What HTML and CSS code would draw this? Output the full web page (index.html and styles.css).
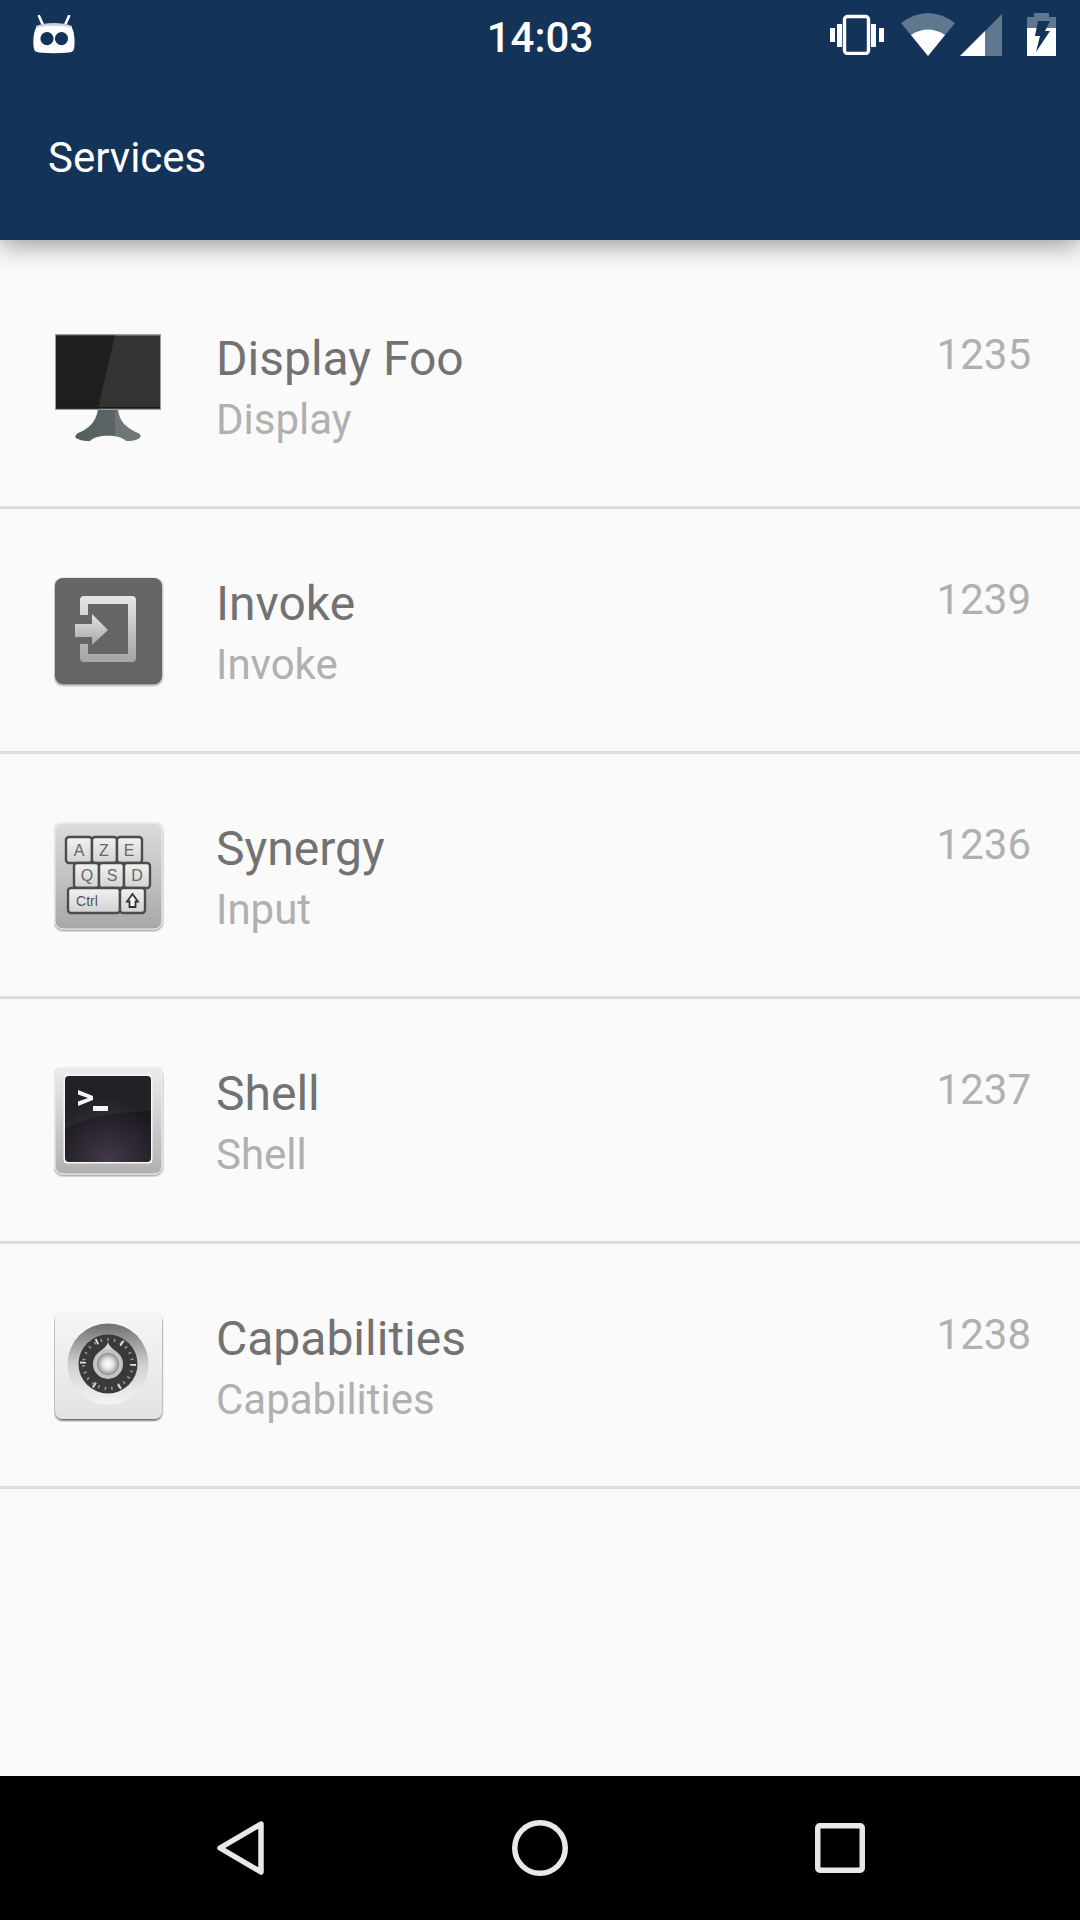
FILE: index.html
```html
<!DOCTYPE html>
<html lang="en">
<head>
<meta charset="utf-8">
<title>Services</title>
<link rel="stylesheet" href="styles.css">
</head>
<body>
<div class="screen">
  <header class="appbar">
    <div class="status">
      <svg class="logo" width="44" height="40" viewBox="0 0 44 40">
        <path d="M6 1 L9.500 9 M36 1 L32.500 9" stroke="#fff" stroke-width="2.600" stroke-linecap="round" fill="none"/>
        <path d="M3 11 C12 7 30 7 39 11 L39 14 H3 Z" fill="#c9d1da"/>
        <path fill-rule="evenodd" fill="#fff" d="M3 13 C12 10 30 10 39 13 C42 18 42 30 41 34 C40 37 38 37 36 37.500 C26 38.500 16 38.500 6 37.500 C4 37 2 37 1 34 C0 30 0 18 3 13 Z M14 17 A6.600 6.600 0 1 0 14 30.200 A6.600 6.600 0 1 0 14 17 Z M28.500 17 A6.600 6.600 0 1 0 28.500 30.200 A6.600 6.600 0 1 0 28.500 17 Z"/>
      </svg>
      <div class="clock">14:03</div>
      <div class="sysicons">
        <svg class="sys-vibrate" width="56" height="42" viewBox="0 0 56 42">
          <rect x="15.500" y="3.500" width="24" height="37" rx="3" fill="none" stroke="#fff" stroke-width="3.400"/>
          <path fill="#fff" d="M1 15h5v14H1zM8 11h5v23H8zM42 11h5v23h-5zM50 15h5v14h-5z"/>
        </svg>
        <svg class="sys-wifi" width="54" height="44" viewBox="0 0 54 44">
          <path fill="#5f7890" d="M27 43 L0 10 Q27 -10 54 10 Z"/>
          <path fill="#fff" d="M27 43 L10 22 Q27 11 44 22 Z"/>
        </svg>
        <svg class="sys-signal" width="42" height="44" viewBox="0 0 42 44">
          <path fill="#5f7890" d="M0 43 L42 1 V43 Z"/>
          <path fill="#fff" d="M0 43 L25 18 V43 Z"/>
        </svg>
        <svg class="sys-battery" width="30" height="44" viewBox="0 0 30 44">
          <path fill="#5f7890" d="M7 0h15v4h7v12H0V4h7z"/>
          <path fill="#fff" d="M0 15h29v28H0z"/>
          <path fill="#133458" d="M11 8 H23 L18 18 H23 L9 39 L13 23 H8 Z"/>
        </svg>
      </div>
    </div>
    <h1 class="title">Services</h1>
  </header>

  <main class="list">
    <section class="row">
      <svg class="icon" width="110" height="110" viewBox="0 0 110 110">
        <defs>
          <linearGradient id="stand" x1="0" x2="1" y1="0" y2="0"><stop offset="0" stop-color="#565e60"/><stop offset=".6" stop-color="#5c6466"/><stop offset=".62" stop-color="#6f7678"/><stop offset="1" stop-color="#6f7678"/></linearGradient>
        </defs>
        <g transform="translate(0 1)">
          <path fill="url(#stand)" d="M44 76 H64 C65 88 72 95 84 100 C88 102 87 105 84 106 C80 108 76 108 72 108 C66 101 42 101 36 108 C32 108 28 108 24 106 C20 105 21 102 24 100 C34 96 42 90 44 76 Z"/>
          <rect x="1" y="1" width="106" height="76" fill="#9aa0a0"/>
          <rect x="2" y="2.500" width="104" height="73" fill="#343433"/>
          <path fill="#1f1f1e" d="M2 2.500 H61 L44 75.500 H2 Z"/>
          <rect x="2" y="74" width="104" height="1.500" fill="#1a1a1a"/>
        </g>
      </svg>
      <div class="text"><div class="name">Display Foo</div><div class="type">Display</div></div>
      <div class="pid">1235</div>
    </section>

    <section class="row">
      <svg class="icon" width="110" height="110" viewBox="0 0 110 110">
        <defs>
          <linearGradient id="inv" x1="0" x2="0" y1="0" y2="1"><stop offset="0" stop-color="#e4e4e4"/><stop offset="1" stop-color="#a6a6a6"/></linearGradient>
          <filter id="sh" x="-10%" y="-10%" width="120%" height="120%"><feDropShadow dx="0" dy="1" stdDeviation="1.500" flood-color="#000" flood-opacity=".55"/></filter>
        </defs>
        <rect x="1" y="1" width="107" height="106" rx="8" fill="#656565" filter="url(#sh)"/>
        <path fill="none" stroke="url(#inv)" stroke-width="8" stroke-linejoin="round" d="M30 38 V23 H78 V81 H30 V67"/>
        <path fill="url(#inv)" d="M21 47 H38 V37 L54 53 L38 68 V60 H21 Z"/>
      </svg>
      <div class="text"><div class="name">Invoke</div><div class="type">Invoke</div></div>
      <div class="pid">1239</div>
    </section>

    <section class="row">
      <svg class="icon" width="110" height="110" viewBox="0 0 110 110">
        <defs>
          <linearGradient id="kb" x1="0" x2="0" y1="0" y2="1"><stop offset="0" stop-color="#dcdcdc"/><stop offset="1" stop-color="#a8a8a8"/></linearGradient>
          <linearGradient id="key" x1="0" x2="0" y1="0" y2="1"><stop offset="0" stop-color="#f2f2f2"/><stop offset="1" stop-color="#d2d2d2"/></linearGradient>
          <filter id="sh2" x="-10%" y="-10%" width="120%" height="120%"><feDropShadow dx="0" dy="1" stdDeviation="1.500" flood-color="#000" flood-opacity=".55"/></filter>
        </defs>
        <rect x="1" y="1" width="107" height="106" rx="8" fill="url(#kb)" stroke="#eee" stroke-width="1" filter="url(#sh2)"/>
        <g fill="url(#key)" stroke="#4c4c4c" stroke-width="2.400">
          <rect x="12" y="15" width="26" height="26" rx="3"/>
          <rect x="38" y="15" width="25" height="26" rx="3"/>
          <rect x="63" y="15" width="25" height="26" rx="3"/>
          <rect x="20" y="41" width="25" height="25" rx="3"/>
          <rect x="45" y="41" width="25" height="25" rx="3"/>
          <rect x="70" y="41" width="26" height="25" rx="3"/>
          <rect x="14" y="66" width="52" height="25" rx="3"/>
          <rect x="66" y="66" width="25" height="25" rx="3"/>
        </g>
        <g class="keytext">
          <text x="25" y="34">A</text><text x="50" y="34">Z</text><text x="75" y="34">E</text>
          <text x="33" y="59">Q</text><text x="58" y="59">S</text><text x="83" y="59">D</text>
          <text x="33" y="84" class="ctrl">Ctrl</text>
        </g>
        <path fill="#f4f4f4" stroke="#333" stroke-width="1.800" d="M78.500 72 L84 79.500 H81.500 V85 H75.500 V79.500 H73 Z"/>
      </svg>
      <div class="text"><div class="name">Synergy</div><div class="type">Input</div></div>
      <div class="pid">1236</div>
    </section>

    <section class="row">
      <svg class="icon" width="110" height="110" viewBox="0 0 110 110">
        <defs>
          <linearGradient id="fr" x1="0" x2="0" y1="0" y2="1"><stop offset="0" stop-color="#ececec"/><stop offset="1" stop-color="#b0b0b0"/></linearGradient>
          <radialGradient id="scr" cx=".5" cy="1" r=".75"><stop offset="0" stop-color="#43394a"/><stop offset="1" stop-color="#17161a"/></radialGradient>
          <filter id="sh3" x="-10%" y="-10%" width="120%" height="120%"><feDropShadow dx="0" dy="1" stdDeviation="1.500" flood-color="#000" flood-opacity=".55"/></filter>
        </defs>
        <rect x="1" y="1" width="107" height="106" rx="8" fill="url(#fr)" stroke="#f0f0f0" filter="url(#sh3)"/>
        <rect x="9.500" y="7.500" width="89" height="89" rx="4" fill="#f5f5f5"/>
        <rect x="11" y="9" width="86" height="86" rx="4" fill="url(#scr)"/>
        <path fill="#fff" fill-opacity=".05" d="M11 13 Q11 9 15 9 H93 Q97 9 97 13 V44 C70 45 35 48 11 62 Z"/>
        <path fill="#f4f4f4" d="M24 23 L39 29 V33 L24 39 V34.500 L34 31 L24 27.500 Z"/>
        <rect x="39" y="39" width="15" height="5" fill="#f4f4f4"/>
      </svg>
      <div class="text"><div class="name">Shell</div><div class="type">Shell</div></div>
      <div class="pid">1237</div>
    </section>

    <section class="row">
      <svg class="icon" width="110" height="110" viewBox="0 0 110 110">
        <defs>
          <linearGradient id="sf" x1="0" x2="0" y1="0" y2="1"><stop offset="0" stop-color="#f6f6f6"/><stop offset="1" stop-color="#e2e2e2"/></linearGradient>
          <linearGradient id="ring" x1="0" x2="0" y1="0" y2="1"><stop offset="0" stop-color="#6e6e6e"/><stop offset=".5" stop-color="#d0d0d0"/><stop offset="1" stop-color="#f4f4f4"/></linearGradient>
          <radialGradient id="knob"><stop offset="0" stop-color="#fff"/><stop offset=".5" stop-color="#e2e2e2"/><stop offset="1" stop-color="#8e8e8e"/></radialGradient>
          <filter id="sh4" x="-10%" y="-10%" width="120%" height="120%"><feDropShadow dx="0" dy="1.500" stdDeviation="1.300" flood-color="#000" flood-opacity=".7"/></filter>
        </defs>
        <rect x="1" y="1" width="107" height="106" rx="8" fill="url(#sf)" filter="url(#sh4)"/>
        <circle cx="54" cy="52" r="40.500" fill="url(#ring)"/>
        <circle cx="54" cy="52" r="29.500" fill="#3a3a3a"/>
        <circle cx="54" cy="52" r="24.500" fill="none" stroke="#9a9a9a" stroke-width="3" stroke-dasharray="1.500 5.200"/>
        <circle cx="54" cy="52" r="25" fill="none" stroke="#dedede" stroke-width="6" stroke-dasharray="1.800 24.380"/>
        <path fill="#d4d4d4" d="M54 30 C55 35 60 37 63 41 H45 C48 37 53 35 54 30 Z"/>
        <circle cx="54" cy="52" r="15" fill="#c4c4c4"/>
        <circle cx="54" cy="52" r="11" fill="url(#knob)"/>
      </svg>
      <div class="text"><div class="name">Capabilities</div><div class="type">Capabilities</div></div>
      <div class="pid">1238</div>
    </section>
  </main>

  <nav class="navbar">
    <svg width="56" height="64" viewBox="0 0 56 64">
      <path d="M49 8 L8 32 L49 56 Z" fill="none" stroke="#e8e8e8" stroke-width="5.500" stroke-linejoin="round"/>
    </svg>
    <svg width="56" height="56" viewBox="0 0 56 56">
      <circle cx="28" cy="28" r="25.250" fill="none" stroke="#e8e8e8" stroke-width="5.500"/>
    </svg>
    <svg width="50" height="50" viewBox="0 0 50 50">
      <rect x="2.750" y="2.750" width="44.500" height="44.500" rx="2" fill="none" stroke="#e8e8e8" stroke-width="5.500"/>
    </svg>
  </nav>
</div>
</body>
</html>
```
FILE: styles.css
```css
html, body { margin: 0; padding: 0; }
body { font-family: Roboto, "Noto Sans", sans-serif; background: #fafafa; }
.screen { width: 1080px; height: 1920px; display: flex; flex-direction: column; overflow: hidden; }
.appbar { height: 240px; flex: none; background: #133458; color: #fff; box-shadow: 0 6px 24px rgba(0,0,0,.38); position: relative; z-index: 1; display: flex; flex-direction: column; }
.status { height: 72px; display: grid; grid-template-columns: 1fr auto 1fr; align-items: start; padding: 0 23px; }
.logo { margin: 15px 0 0 10px; }
.clock { font-size: 42px; font-weight: 500; line-height: 76px; }
.sysicons { display: flex; justify-content: flex-end; align-items: flex-start; margin-top: 13px; }
.sys-wifi { margin-left: 16px; }
.sys-signal { margin-left: 5px; }
.sys-battery { margin-left: 25px; }
.title { margin: 62px 0 0 48px; font-size: 42px; font-weight: 400; line-height: 48px; }
.list { flex: 1; padding-top: 24px; }
.row { height: 242px; border-bottom: 3px solid #dedede; display: flex; align-items: flex-start; }
.icon { margin: 68px 0 0 54px; flex: none; }
.text { margin: 67px 0 0 52px; flex: 1; }
.name { font-size: 48px; line-height: 56px; color: #727272; }
.type { font-size: 42px; line-height: 50px; margin-top: 8px; color: #b0b0b0; }
.pid { margin: 66px 49px 0 0; font-size: 42px; line-height: 50px; color: #b0b0b0; }
.keytext text { font-family: "Liberation Sans", sans-serif; font-size: 16px; fill: #666; text-anchor: middle; }
.keytext text.ctrl { font-size: 14px; fill: #555; }
.navbar { height: 144px; flex: none; background: #000; display: grid; grid-template-columns: repeat(3, 300px); justify-items: center; align-items: center; padding-left: 90px; }
```
